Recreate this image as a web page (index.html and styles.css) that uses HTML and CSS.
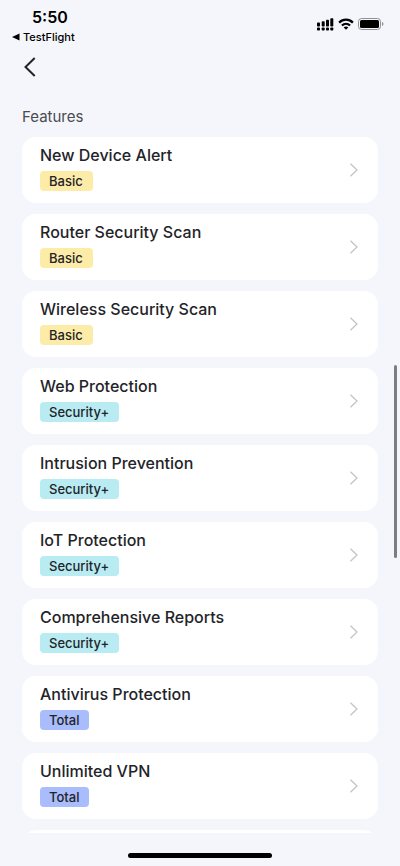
FILE: index.html
```html
<!DOCTYPE html>
<html lang="en">
<head>
<meta charset="utf-8">
<meta name="viewport" content="width=device-width, initial-scale=1">
<title>Features</title>
<link rel="stylesheet" href="styles.css">
</head>
<body>
<div class="screen">
  <header class="top">
    <div class="status">
      <div class="status-left">
        <span class="time">5:50</span>
        <a class="return" href="#"><svg width="8" height="8" viewBox="0 0 8 8" aria-hidden="true"><path d="M0 4 7.500 .5v7z"/></svg>TestFlight</a>
      </div>
      <div class="status-icons">
        <svg width="17" height="13" viewBox="0 0 17 13" aria-hidden="true"><rect x="0" y="4.500" width="3" height="4" rx=".8"/><rect x="4.700" y="3.300" width="3" height="5.200" rx=".8"/><rect x="9" y="1.700" width="3" height="6.800" rx=".8"/><rect x="13.300" y=".3" width="3" height="8.200" rx=".8"/><rect x="0" y="9.500" width="3" height="3" rx=".8"/><rect x="4.700" y="9.500" width="3" height="3" rx=".8"/><rect x="9" y="9.500" width="3" height="3" rx=".8"/><rect x="13.300" y="9.500" width="3" height="3" rx=".8"/></svg>
        <svg width="16" height="12" viewBox="0 0 16 12" aria-hidden="true"><g fill="none" stroke="#000" stroke-width="2.200"><path d="M1.100 4.600C5 .7 11 .7 14.900 4.600"/><path d="M3.900 7.500c2.400-2.300 5.800-2.300 8.200 0"/></g><path d="M5.700 9.400c1.300-1.200 3.300-1.200 4.600 0L8 11.800z"/></svg>
        <svg width="26" height="12" viewBox="0 0 26 12" aria-hidden="true"><rect x=".5" y=".5" width="22" height="11" rx="3" fill="none" stroke="#8f9092"/><rect x="2" y="2" width="19" height="8" rx="1.500"/><path d="M24 4c2 .7 2 3.300 0 4z" fill="#8f9092"/></svg>
      </div>
    </div>
    <button class="back" type="button" aria-label="Back"><svg width="12" height="20" viewBox="0 0 12 20" aria-hidden="true"><path d="M10.700 1 1.500 10l9.200 9"/></svg></button>
  </header>
  <main class="content">
    <h1 class="heading">Features</h1>
    <ul class="list">
      <li><a class="card" href="#"><span class="name">New Device Alert</span><span class="badge basic">Basic</span><svg class="chevron" viewBox="0 0 8 14" aria-hidden="true"><path d="m.5 .8 6.500 6.200-6.500 6.200"/></svg></a></li>
      <li><a class="card" href="#"><span class="name">Router Security Scan</span><span class="badge basic">Basic</span><svg class="chevron" viewBox="0 0 8 14" aria-hidden="true"><path d="m.5 .8 6.500 6.200-6.500 6.200"/></svg></a></li>
      <li><a class="card" href="#"><span class="name">Wireless Security Scan</span><span class="badge basic">Basic</span><svg class="chevron" viewBox="0 0 8 14" aria-hidden="true"><path d="m.5 .8 6.500 6.200-6.500 6.200"/></svg></a></li>
      <li><a class="card" href="#"><span class="name">Web Protection</span><span class="badge security">Security+</span><svg class="chevron" viewBox="0 0 8 14" aria-hidden="true"><path d="m.5 .8 6.500 6.200-6.500 6.200"/></svg></a></li>
      <li><a class="card" href="#"><span class="name">Intrusion Prevention</span><span class="badge security">Security+</span><svg class="chevron" viewBox="0 0 8 14" aria-hidden="true"><path d="m.5 .8 6.500 6.200-6.500 6.200"/></svg></a></li>
      <li><a class="card" href="#"><span class="name">IoT Protection</span><span class="badge security">Security+</span><svg class="chevron" viewBox="0 0 8 14" aria-hidden="true"><path d="m.5 .8 6.500 6.200-6.500 6.200"/></svg></a></li>
      <li><a class="card" href="#"><span class="name">Comprehensive Reports</span><span class="badge security">Security+</span><svg class="chevron" viewBox="0 0 8 14" aria-hidden="true"><path d="m.5 .8 6.500 6.200-6.500 6.200"/></svg></a></li>
      <li><a class="card" href="#"><span class="name">Antivirus Protection</span><span class="badge total">Total</span><svg class="chevron" viewBox="0 0 8 14" aria-hidden="true"><path d="m.5 .8 6.500 6.200-6.500 6.200"/></svg></a></li>
      <li><a class="card" href="#"><span class="name">Unlimited VPN</span><span class="badge total">Total</span><svg class="chevron" viewBox="0 0 8 14" aria-hidden="true"><path d="m.5 .8 6.500 6.200-6.500 6.200"/></svg></a></li>
      <li class="card"></li>
    </ul>
    <div class="scroll-thumb"></div>
  </main>
  <footer class="home"><div class="home-bar"></div></footer>
</div>
</body>
</html>
```

FILE: styles.css
```css
* {
  box-sizing: border-box;
}

body {
  margin: 0;
  background: #f5f6fb;
  color: #1f2429;
  font-family: Inter, "Liberation Sans", sans-serif;
}

a {
  color: inherit;
  text-decoration: none;
}

svg {
  display: block;
}

.screen {
  display: flex;
  flex-direction: column;
  height: 100vh;
}

.status {
  display: flex;
  justify-content: space-between;
  padding: 7px 16px 0 12px;
  color: #000;
}

.status-left {
  display: flex;
  flex-direction: column;
}

.time {
  padding-left: 20px;
  font-size: 16px;
  line-height: 20px;
  font-weight: 600;
}

.return {
  display: flex;
  align-items: center;
  gap: 3px;
  font-size: 11px;
  line-height: 20px;
  font-weight: 500;
}

.status-icons {
  display: flex;
  align-items: center;
  gap: 4px;
  height: 34px;
}

.back {
  display: block;
  margin: 6px 0 0 20px;
  padding: 4px;
  border: 0;
  background: none;
}

.back path {
  fill: none;
  stroke: #1f2429;
  stroke-width: 2;
}

.content {
  position: relative;
  flex: 1;
  min-height: 0;
  overflow: hidden;
  padding: 25px 22px 0;
}

.heading {
  margin: 0 0 9px;
  color: #4a4b4f;
  font-size: 15px;
  line-height: 22px;
  font-weight: 400;
}

.list {
  display: flex;
  flex-direction: column;
  gap: 11px;
  margin: 0;
  padding: 0;
  list-style: none;
}

.card {
  display: grid;
  grid-template-columns: 1fr auto;
  grid-template-rows: 22px 20px;
  row-gap: 5px;
  align-items: center;
  padding: 7px 20px 12px 18px;
  border-radius: 14px;
  background: #fff;
}

.name {
  font-size: 16px;
  line-height: 22px;
  font-weight: 500;
}

.badge {
  grid-row: 2;
  justify-self: start;
  padding: 0 10px 0 9px;
  border-radius: 4px;
  font-size: 13px;
  line-height: 20px;
  font-weight: 500;
}

.basic {
  background: #fdeba8;
}

.security {
  background: #b9ecf2;
}

.total {
  background: #a9bcfb;
}

.chevron {
  grid-column: 2;
  grid-row: 1 / 3;
  width: 8px;
  height: 14px;
  margin-top: 4px;
}

.chevron path {
  fill: none;
  stroke: #c2c2c4;
  stroke-width: 1.2;
}

.scroll-thumb {
  position: absolute;
  top: 37.7%;
  right: 3px;
  width: 3px;
  height: 25.7%;
  border-radius: 2px;
  background: #7c7d7f;
}

.home {
  padding: 20px 0 8px;
}

.home-bar {
  width: 36%;
  height: 5px;
  margin: 0 auto;
  border-radius: 3px;
  background: #000;
}
```
